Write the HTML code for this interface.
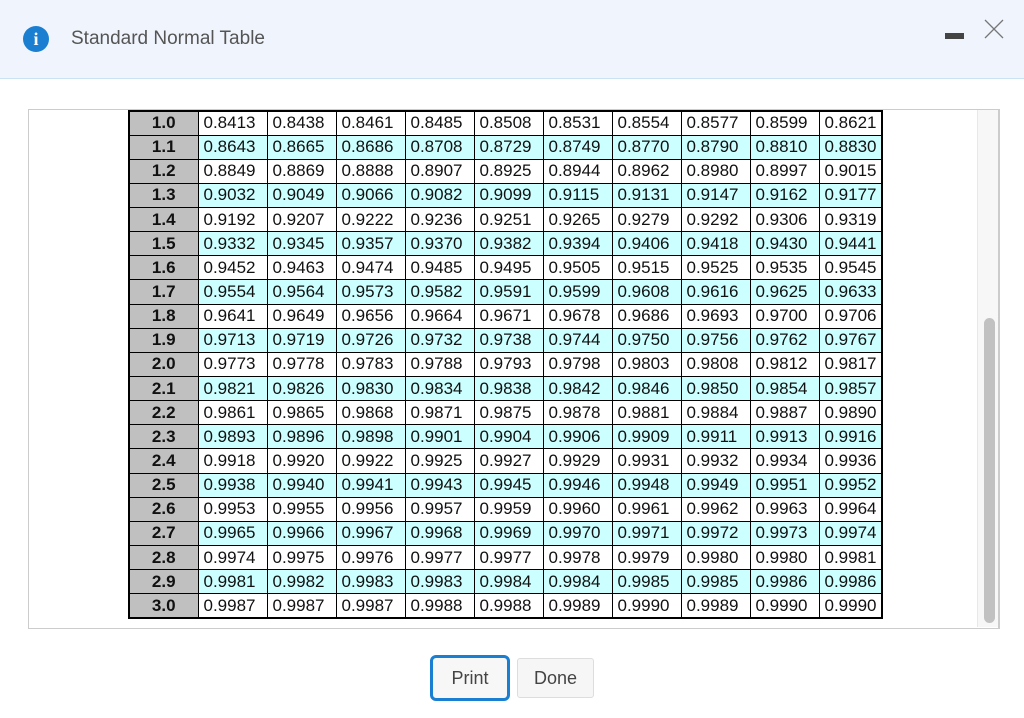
<!DOCTYPE html>
<html><head><meta charset="utf-8"><style>
*{box-sizing:border-box}
body{margin:0;width:1024px;height:718px;background:#fff;font-family:"Liberation Sans",sans-serif;position:relative;overflow:hidden}
.hdr{position:absolute;left:0;top:0;width:1024px;height:79px;background:#f0f5fd;border-bottom:1px solid #c9e3f5}
.ic{position:absolute;left:23px;top:26px;width:26px;height:26px;border-radius:50%;background:#1a7fd1;color:#fff;font:bold 18px "Liberation Serif",serif;text-align:center;line-height:26px}
.tt{position:absolute;left:71px;top:28px;font-size:19px;color:#555}
.min{position:absolute;left:945px;top:33px;width:19px;height:6px;background:#444}
.frame{position:absolute;left:28px;top:109px;width:972px;height:520px;border:1px solid #ccc;border-right:2px solid #ccc}
.sb{position:absolute;left:977px;top:110px;width:21px;height:517px;background:#f7f7f7;border-left:1px solid #e8e8e8}
.th{position:absolute;left:984px;top:318px;width:11px;height:305px;background:#c1c1c1;border-radius:6px}
table{position:absolute;left:128px;top:110px;border-collapse:collapse;border:2px solid #000;font-size:17px;table-layout:fixed;width:753px}
td{border:1px solid #000;height:24.15px;padding:0 0 0 5px;width:69px;color:#111;line-height:22px;white-space:nowrap;overflow:hidden}
td:last-child{width:63px}
td.z{background:#c0c0c0;font-weight:bold;text-align:center;padding:0;width:69px}
tr:nth-child(even) td{background:#ccffff}
tr:nth-child(even) td.z{background:#c0c0c0}
.btn{position:absolute;font-size:18px;color:#444;text-align:center}
.p{left:430px;top:655px;width:80px;height:46px;border:3px solid #1a7fd1;border-radius:6px;line-height:40px;background:#f7f7f7}
.d{left:517px;top:658px;width:77px;height:40px;border:1px solid #ddd;border-radius:3px;line-height:38px;background:#f6f6f6}
</style></head><body>
<div class="hdr"><div class="ic">i</div><div class="tt">Standard Normal Table</div><div class="min"></div>
<svg style="position:absolute;left:984px;top:19px" width="20" height="20"><path d="M1 1L19 19M19 1L1 19" stroke="#777" stroke-width="1.3"/></svg></div>
<div class="frame"></div><div class="sb"></div><div class="th"></div>
<table>
<tr><td class="z">1.0</td><td>0.8413</td><td>0.8438</td><td>0.8461</td><td>0.8485</td><td>0.8508</td><td>0.8531</td><td>0.8554</td><td>0.8577</td><td>0.8599</td><td>0.8621</td></tr>
<tr><td class="z">1.1</td><td>0.8643</td><td>0.8665</td><td>0.8686</td><td>0.8708</td><td>0.8729</td><td>0.8749</td><td>0.8770</td><td>0.8790</td><td>0.8810</td><td>0.8830</td></tr>
<tr><td class="z">1.2</td><td>0.8849</td><td>0.8869</td><td>0.8888</td><td>0.8907</td><td>0.8925</td><td>0.8944</td><td>0.8962</td><td>0.8980</td><td>0.8997</td><td>0.9015</td></tr>
<tr><td class="z">1.3</td><td>0.9032</td><td>0.9049</td><td>0.9066</td><td>0.9082</td><td>0.9099</td><td>0.9115</td><td>0.9131</td><td>0.9147</td><td>0.9162</td><td>0.9177</td></tr>
<tr><td class="z">1.4</td><td>0.9192</td><td>0.9207</td><td>0.9222</td><td>0.9236</td><td>0.9251</td><td>0.9265</td><td>0.9279</td><td>0.9292</td><td>0.9306</td><td>0.9319</td></tr>
<tr><td class="z">1.5</td><td>0.9332</td><td>0.9345</td><td>0.9357</td><td>0.9370</td><td>0.9382</td><td>0.9394</td><td>0.9406</td><td>0.9418</td><td>0.9430</td><td>0.9441</td></tr>
<tr><td class="z">1.6</td><td>0.9452</td><td>0.9463</td><td>0.9474</td><td>0.9485</td><td>0.9495</td><td>0.9505</td><td>0.9515</td><td>0.9525</td><td>0.9535</td><td>0.9545</td></tr>
<tr><td class="z">1.7</td><td>0.9554</td><td>0.9564</td><td>0.9573</td><td>0.9582</td><td>0.9591</td><td>0.9599</td><td>0.9608</td><td>0.9616</td><td>0.9625</td><td>0.9633</td></tr>
<tr><td class="z">1.8</td><td>0.9641</td><td>0.9649</td><td>0.9656</td><td>0.9664</td><td>0.9671</td><td>0.9678</td><td>0.9686</td><td>0.9693</td><td>0.9700</td><td>0.9706</td></tr>
<tr><td class="z">1.9</td><td>0.9713</td><td>0.9719</td><td>0.9726</td><td>0.9732</td><td>0.9738</td><td>0.9744</td><td>0.9750</td><td>0.9756</td><td>0.9762</td><td>0.9767</td></tr>
<tr><td class="z">2.0</td><td>0.9773</td><td>0.9778</td><td>0.9783</td><td>0.9788</td><td>0.9793</td><td>0.9798</td><td>0.9803</td><td>0.9808</td><td>0.9812</td><td>0.9817</td></tr>
<tr><td class="z">2.1</td><td>0.9821</td><td>0.9826</td><td>0.9830</td><td>0.9834</td><td>0.9838</td><td>0.9842</td><td>0.9846</td><td>0.9850</td><td>0.9854</td><td>0.9857</td></tr>
<tr><td class="z">2.2</td><td>0.9861</td><td>0.9865</td><td>0.9868</td><td>0.9871</td><td>0.9875</td><td>0.9878</td><td>0.9881</td><td>0.9884</td><td>0.9887</td><td>0.9890</td></tr>
<tr><td class="z">2.3</td><td>0.9893</td><td>0.9896</td><td>0.9898</td><td>0.9901</td><td>0.9904</td><td>0.9906</td><td>0.9909</td><td>0.9911</td><td>0.9913</td><td>0.9916</td></tr>
<tr><td class="z">2.4</td><td>0.9918</td><td>0.9920</td><td>0.9922</td><td>0.9925</td><td>0.9927</td><td>0.9929</td><td>0.9931</td><td>0.9932</td><td>0.9934</td><td>0.9936</td></tr>
<tr><td class="z">2.5</td><td>0.9938</td><td>0.9940</td><td>0.9941</td><td>0.9943</td><td>0.9945</td><td>0.9946</td><td>0.9948</td><td>0.9949</td><td>0.9951</td><td>0.9952</td></tr>
<tr><td class="z">2.6</td><td>0.9953</td><td>0.9955</td><td>0.9956</td><td>0.9957</td><td>0.9959</td><td>0.9960</td><td>0.9961</td><td>0.9962</td><td>0.9963</td><td>0.9964</td></tr>
<tr><td class="z">2.7</td><td>0.9965</td><td>0.9966</td><td>0.9967</td><td>0.9968</td><td>0.9969</td><td>0.9970</td><td>0.9971</td><td>0.9972</td><td>0.9973</td><td>0.9974</td></tr>
<tr><td class="z">2.8</td><td>0.9974</td><td>0.9975</td><td>0.9976</td><td>0.9977</td><td>0.9977</td><td>0.9978</td><td>0.9979</td><td>0.9980</td><td>0.9980</td><td>0.9981</td></tr>
<tr><td class="z">2.9</td><td>0.9981</td><td>0.9982</td><td>0.9983</td><td>0.9983</td><td>0.9984</td><td>0.9984</td><td>0.9985</td><td>0.9985</td><td>0.9986</td><td>0.9986</td></tr>
<tr><td class="z">3.0</td><td>0.9987</td><td>0.9987</td><td>0.9987</td><td>0.9988</td><td>0.9988</td><td>0.9989</td><td>0.9990</td><td>0.9989</td><td>0.9990</td><td>0.9990</td></tr>
</table>
<div class="btn p">Print</div><div class="btn d">Done</div>
</body></html>
